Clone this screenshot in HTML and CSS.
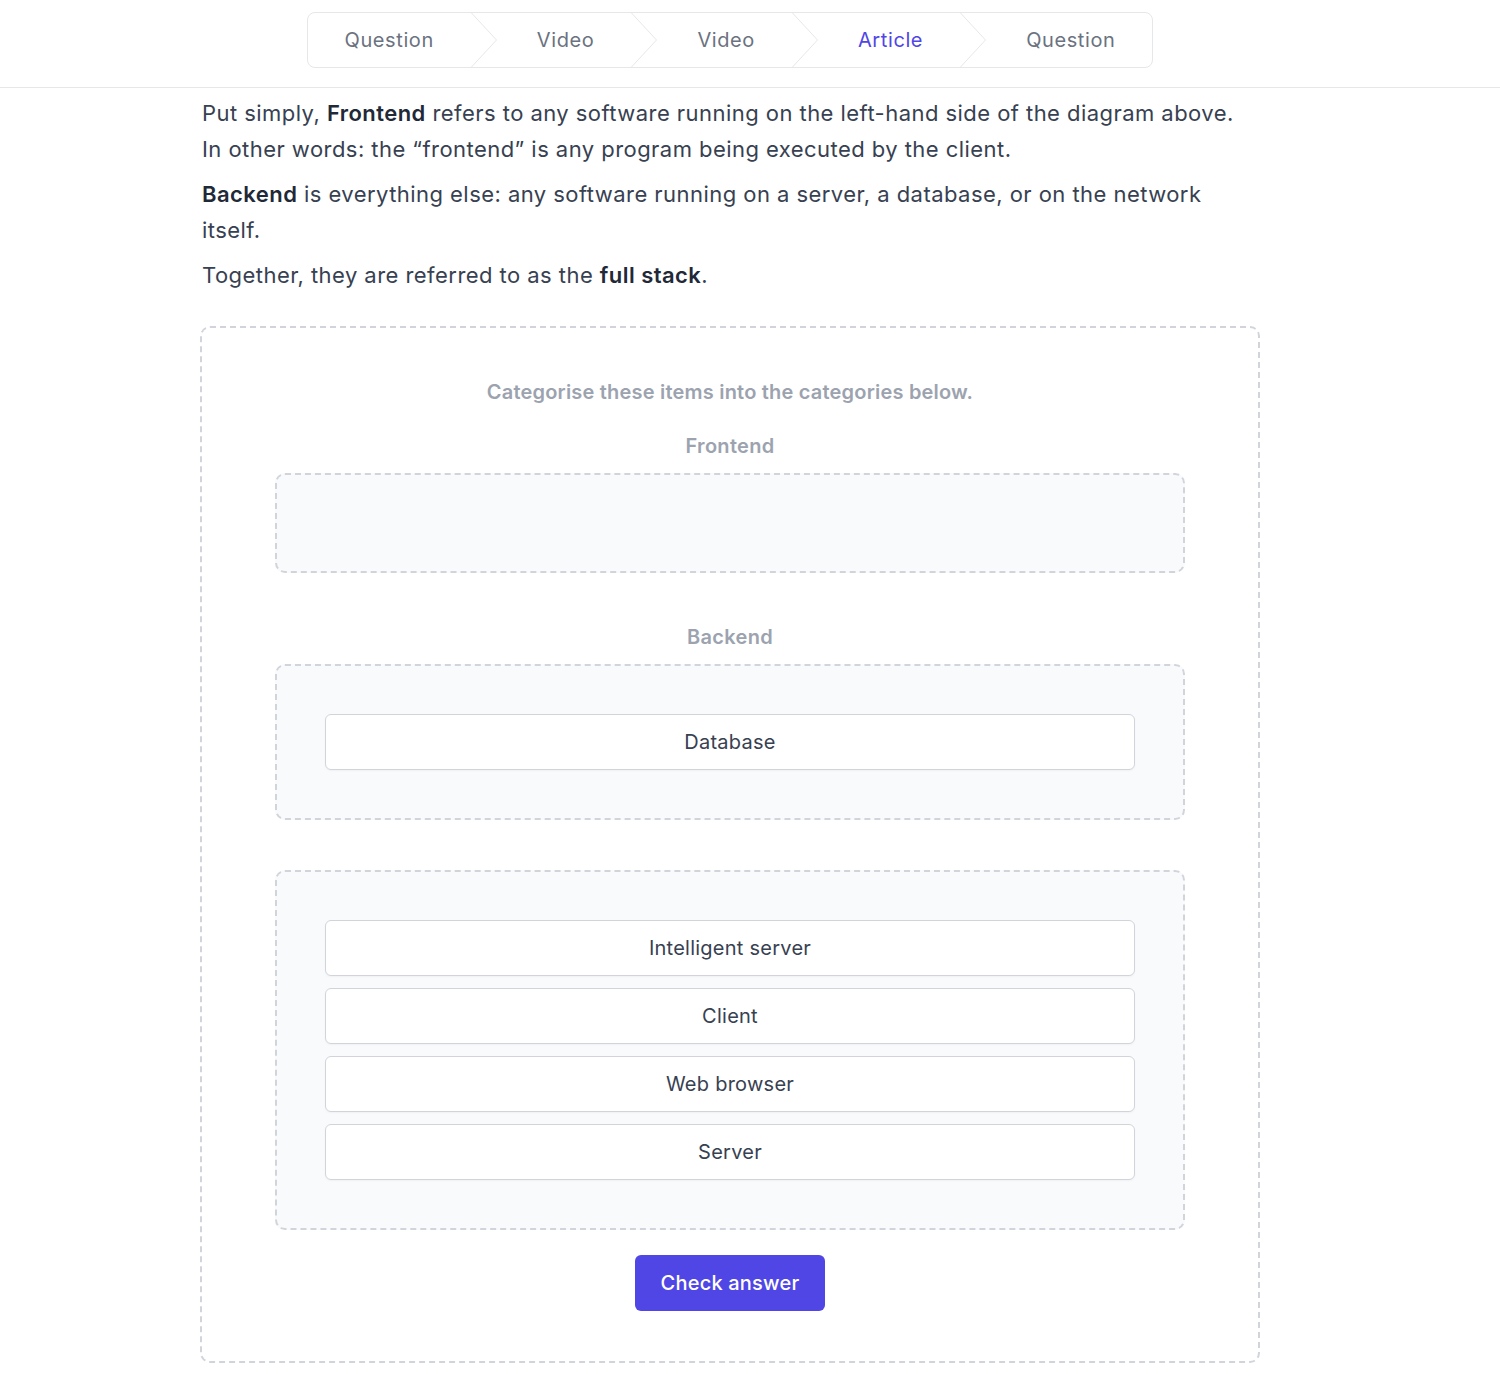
FILE: index.html
```html
<!DOCTYPE html>
<html lang="en">
<head>
<meta charset="utf-8">
<title>Frontend and Backend</title>
<link rel="stylesheet" href="styles.css">
</head>
<body>
<header class="header">
  <nav class="steps">
    <div class="step step-first">Question</div>
    <svg class="sep" viewBox="0 0 26 56" preserveAspectRatio="none"><path d="M0.5 0 L25.5 28 L0.5 56" fill="none" stroke="#e5e7eb" stroke-width="1"/></svg>
    <div class="step">Video</div>
    <svg class="sep" viewBox="0 0 26 56" preserveAspectRatio="none"><path d="M0.5 0 L25.5 28 L0.5 56" fill="none" stroke="#e5e7eb" stroke-width="1"/></svg>
    <div class="step">Video</div>
    <svg class="sep" viewBox="0 0 26 56" preserveAspectRatio="none"><path d="M0.5 0 L25.5 28 L0.5 56" fill="none" stroke="#e5e7eb" stroke-width="1"/></svg>
    <div class="step step-active">Article</div>
    <svg class="sep" viewBox="0 0 26 56" preserveAspectRatio="none"><path d="M0.5 0 L25.5 28 L0.5 56" fill="none" stroke="#e5e7eb" stroke-width="1"/></svg>
    <div class="step step-last">Question</div>
  </nav>
</header>
<main class="content">
  <p>Put simply, <strong>Frontend</strong> refers to any software running on the left-hand side of the diagram above. In other words: the “frontend” is any program being executed by the client.</p>
  <p><strong>Backend</strong> is everything else: any software running on a server, a database, or on the network itself.</p>
  <p>Together, they are referred to as the <strong>full stack</strong>.</p>

  <section class="exercise">
    <div class="instructions">Categorise these items into the categories below.</div>
    <div class="category">
      <div class="cat-label">Frontend</div>
      <div class="zone"></div>
    </div>
    <div class="category">
      <div class="cat-label">Backend</div>
      <div class="zone">
        <div class="item">Database</div>
      </div>
    </div>
    <div class="category">
      <div class="zone">
        <div class="item">Intelligent server</div>
        <div class="item">Client</div>
        <div class="item">Web browser</div>
        <div class="item">Server</div>
      </div>
    </div>
    <div class="actions">
      <button class="check">Check answer</button>
    </div>
  </section>
</main>
</body>
</html>
```

FILE: styles.css
```css
* { box-sizing: border-box; }
body {
  margin: 0;
  font-family: Inter, "Noto Sans", sans-serif;
  color: #374151;
  background: #fff;
}
.header {
  padding: 12px 40px 19px 0;
  border-bottom: 1px solid #e5e7eb;
  display: flex;
  justify-content: center;
}
.steps {
  display: flex;
  align-items: stretch;
  height: 56px;
  border: 1px solid #e5e7eb;
  border-radius: 8px;
  overflow: hidden;
}
.step {
  display: flex;
  align-items: center;
  font-size: 20px;
  color: #6b7280;
  padding: 0 37px 0 40px;
  letter-spacing: 0.6px;
}
.step-first { padding-left: 37px; }
.step-last { padding-right: 37px; }
.step-active { color: #4f46e5; }
.sep {
  width: 26px;
  height: 54px;
  flex: none;
}
.content {
  width: 1060px;
  margin: 0 auto;
  position: relative;
  left: -20px;
  padding-top: 7px;
}
.content p {
  margin: 0 0 9px;
  padding-left: 2px;
  max-width: 1047px;
  font-size: 22px;
  line-height: 36px;
  letter-spacing: 0.45px;
  color: #374151;
}
.content strong { color: #1f2937; font-weight: 600; }
.exercise {
  margin-top: 33px;
  border: 2px dashed #d1d5db;
  border-radius: 10px;
  padding: 48px 73px 50px;
  display: flex;
  flex-direction: column;
  gap: 50px;
}
.instructions {
  text-align: center;
  font-size: 20px;
  line-height: 32px;
  font-weight: 600;
  letter-spacing: 0.2px;
  color: #9ca3af;
  margin-bottom: -26px;
}
.cat-label {
  text-align: center;
  font-size: 20px;
  line-height: 28px;
  font-weight: 600;
  letter-spacing: 0.3px;
  color: #9ca3af;
  margin-bottom: 13px;
}
.zone {
  border: 2px dashed #d1d5db;
  border-radius: 10px;
  background: #f9fafb;
  padding: 48px;
  min-height: 100px;
  display: flex;
  flex-direction: column;
  gap: 12px;
}
.item {
  height: 56px;
  background: #fff;
  border: 1px solid #d1d5db;
  border-radius: 6px;
  display: flex;
  align-items: center;
  justify-content: center;
  font-size: 20px;
  letter-spacing: 0.25px;
  color: #374151;
  box-shadow: 0 1px 2px rgba(0,0,0,0.04);
}
.actions {
  display: flex;
  justify-content: center;
  margin-top: -25px;
}
.check {
  height: 56px;
  padding: 0 26px;
  background: #4f46e5;
  color: #fff;
  border: none;
  border-radius: 6px;
  font-family: Inter, "Noto Sans", sans-serif;
  font-size: 20px;
  font-weight: 500;
  letter-spacing: 0.2px;
}
```
